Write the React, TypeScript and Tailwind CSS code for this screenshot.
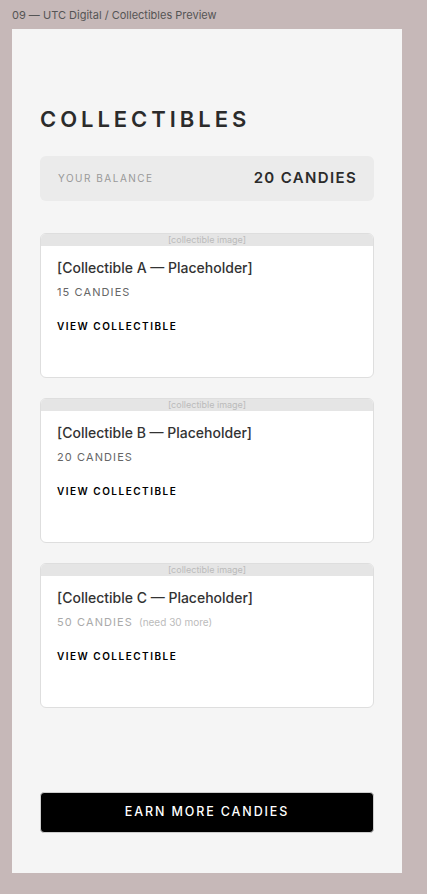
import React from "react";

const items = [
  { name: "[Collectible A — Placeholder]", cost: 15, need: 0 },
  { name: "[Collectible B — Placeholder]", cost: 20, need: 0 },
  { name: "[Collectible C — Placeholder]", cost: 50, need: 30 },
];

export default function App() {
  return (
    <div
      className="min-h-[894px] w-[427px] bg-[#c6b8b8] px-3 pb-[21px]"
      style={{ fontFamily: "Inter, 'Noto Sans', sans-serif" }}
    >
      <div className="h-[29px] pt-[8px] text-[11px] leading-[14px] text-[#555]">
        09 — UTC Digital / Collectibles Preview
      </div>
      <div className="flex h-[844px] w-[390px] flex-col bg-[#f5f5f5] px-[28px] pt-[77px] pb-[40px]">
        <h1 className="text-[22px] font-semibold leading-[27px] tracking-[0.18em] text-[#2b2b2b]">
          COLLECTIBLES
        </h1>
        <div className="mt-[23px] flex h-[45px] items-center justify-between rounded-[6px] bg-[#ebebeb] pl-[18px] pr-[17px]">
          <span className="text-[10px] tracking-[0.15em] text-[#999]">YOUR BALANCE</span>
          <span className="text-[15px] font-semibold tracking-[0.09em] text-[#2b2b2b]">20 CANDIES</span>
        </div>
        <div className="mt-[32px] flex flex-col gap-[20px]">
          {items.map((it) => (
            <div
              key={it.name}
              className="h-[145px] overflow-hidden rounded-[6px] border border-[#dedede] bg-white"
            >
              <div className="flex h-[12px] items-center justify-center bg-[#e5e5e5] text-[9px] leading-[12px] text-[#bbb]">
                [collectible image]
              </div>
              <div className="px-[16px] pt-[12px]">
                <div className="text-[14px] font-medium leading-[20px] text-[#333]">{it.name}</div>
                <div className="mt-[6px] flex items-baseline gap-[6px] leading-[16px]">
                  <span
                    className={
                      it.need
                        ? "text-[11px] tracking-[0.1em] text-[#aaa]"
                        : "text-[11px] tracking-[0.1em] text-[#666]"
                    }
                  >
                    {it.cost} CANDIES
                  </span>
                  {it.need ? (
                    <span className="text-[10px] text-[#bbb]">(need {it.need} more)</span>
                  ) : null}
                </div>
                <div className="mt-[19px] text-[10px] font-semibold leading-[14px] tracking-[0.15em] text-black">
                  VIEW COLLECTIBLE
                </div>
              </div>
            </div>
          ))}
        </div>
        <button className="mt-auto flex h-[41px] w-full items-center justify-center rounded-[4px] border border-[#ccc] bg-black text-[12.5px] font-medium tracking-[0.15em] text-white">
          EARN MORE CANDIES
        </button>
      </div>
    </div>
  );
}
